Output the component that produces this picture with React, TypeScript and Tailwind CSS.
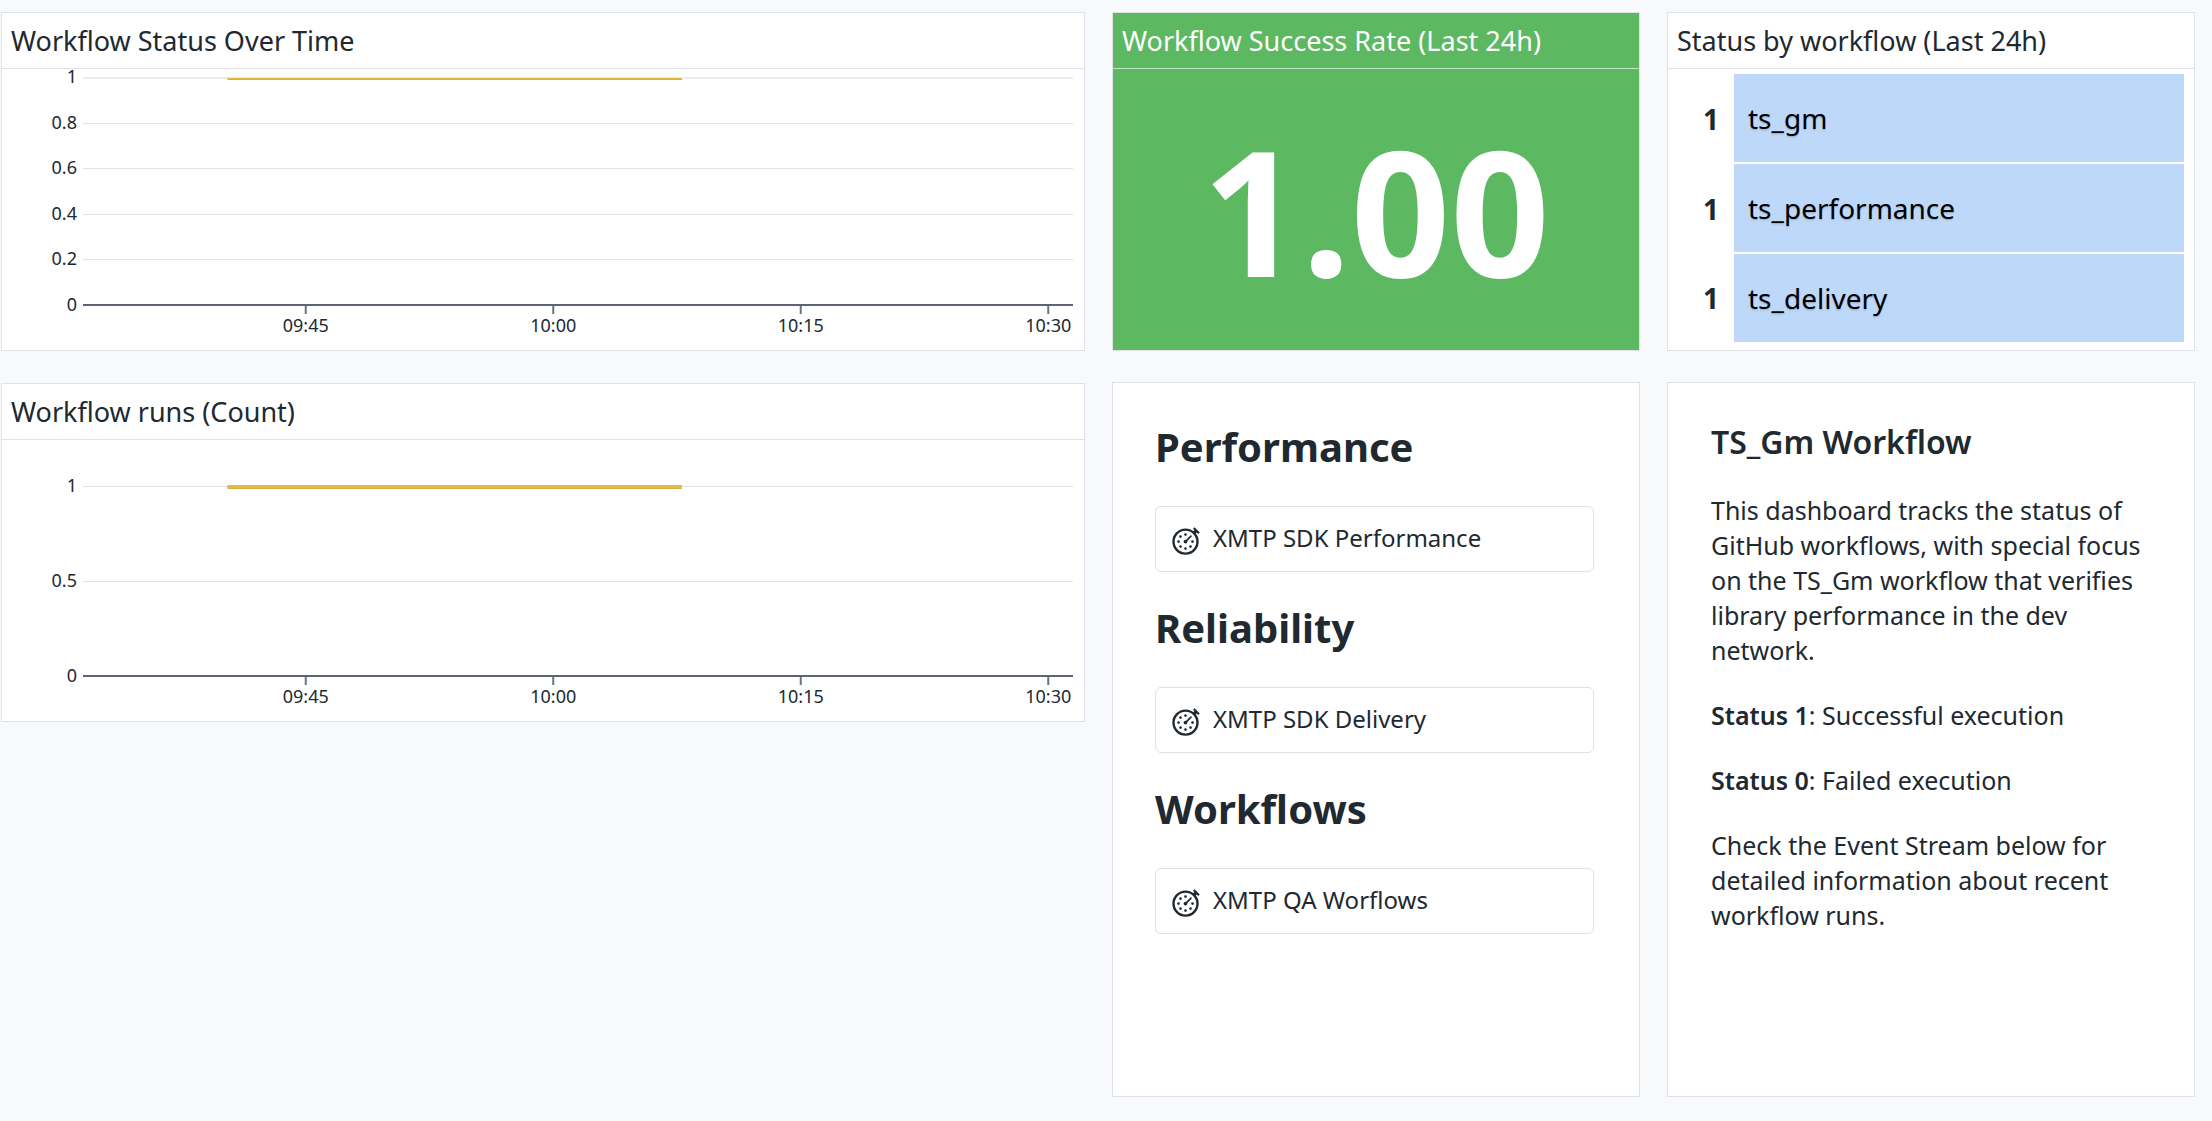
import type { ReactNode } from "react";

type GridLine = { label: string; y: number; weight: number };

const TIME_TICKS = [
  { label: "09:45", x: "22.5%" },
  { label: "10:00", x: "47.5%" },
  { label: "10:15", x: "72.5%" },
  { label: "10:30", x: "97.5%" },
];

const STATUS_GRID: GridLine[] = [
  { label: "1", y: 9, weight: 2 },
  { label: "0.8", y: 54.5, weight: 1 },
  { label: "0.6", y: 99.5, weight: 1 },
  { label: "0.4", y: 145.5, weight: 1 },
  { label: "0.2", y: 190.5, weight: 1 },
];

const RUNS_GRID: GridLine[] = [
  { label: "1", y: 46.5, weight: 1 },
  { label: "0.5", y: 141.5, weight: 1 },
];

const STATUSES = [
  { name: "ts_gm", value: 1 },
  { name: "ts_performance", value: 1 },
  { name: "ts_delivery", value: 1 },
];

const LINK_GROUPS = [
  { heading: "Performance", link: "XMTP SDK Performance" },
  { heading: "Reliability", link: "XMTP SDK Delivery" },
  { heading: "Workflows", link: "XMTP QA Worflows" },
];

function Widget({ title, children }: { title: string; children: ReactNode }) {
  return (
    <section className="border border-[#dfe2ea] bg-white">
      <h2 className="border-b border-[#dfe2ea] px-[9px] text-[27px] leading-[55px]">{title}</h2>
      {children}
    </section>
  );
}

function TimeChart({ label, grid, seriesY, seriesHeight }: {
  label: string;
  grid: GridLine[];
  seriesY: number;
  seriesHeight: number;
}) {
  return (
    <div className="pr-[11px] pl-[81px]">
      <svg role="img" aria-label={label} className="block h-[281px] w-full overflow-visible text-[18px]" fill="#212930">
        {grid.map((g) => (
          <g key={g.label}>
            <line x1="0" x2="100%" y1={g.y} y2={g.y} stroke={g.weight === 2 ? "#ebebeb" : "#e1e2e3"} strokeWidth={g.weight} />
            <text x="-6" y={g.y + 5} textAnchor="end">{g.label}</text>
          </g>
        ))}
        <rect x="14.6%" y={seriesY} width="45.9%" height={seriesHeight} fill="#d5ae51" />
        <rect x="14.6%" y={seriesY} width="45.9%" height={seriesHeight - 1} fill="#e5b93a" />
        <line x1="0" x2="100%" y1="236" y2="236" stroke="#5c6278" strokeWidth="2" />
        <text x="-6" y="242" textAnchor="end">0</text>
        {TIME_TICKS.map((t) => (
          <g key={t.label}>
            <line x1={t.x} x2={t.x} y1="237" y2="245" stroke="#6b7187" strokeWidth="2" />
            <text x={t.x} y="263" textAnchor="middle">{t.label}</text>
          </g>
        ))}
      </svg>
    </div>
  );
}

function StopwatchIcon() {
  const dots = [[0, -7], [-5, -5], [-7, 0], [-5, 5], [0, 7], [5, 5], [7, 0]];
  return (
    <svg aria-hidden="true" viewBox="0 0 28 28" className="size-7 shrink-0" fill="#212930" stroke="#212930">
      <circle cx="13.5" cy="14.6" r="12" fill="none" strokeWidth="2.4" />
      {dots.map(([x, y]) => (
        <circle key={`${x},${y}`} cx={13.5 + x} cy={14.6 + y} r="1.3" stroke="none" />
      ))}
      <circle cx="13.5" cy="14.6" r="1.9" stroke="none" />
      <path d="M13.5 14.6 19 9.1" strokeWidth="1.6" strokeLinecap="round" />
      <path d="M21.6 6.3 24.3 3.6" strokeWidth="3.4" />
      <path d="M21.8 1 27 6.2" strokeWidth="2.2" />
    </svg>
  );
}

export default function App() {
  return (
    <main className="grid min-h-screen grid-cols-[1084fr_528fr_528fr] gap-x-[27px] bg-[#f8f9fb] pt-3 pr-[17px] pb-6 pl-px font-['Noto_Sans',sans-serif] text-[#212930]">
      <div className="flex flex-col gap-8">
        <Widget title="Workflow Status Over Time">
          <TimeChart label="Workflow status over time" grid={STATUS_GRID} seriesY={9} seriesHeight={2} />
        </Widget>
        <Widget title="Workflow runs (Count)">
          <TimeChart label="Workflow runs" grid={RUNS_GRID} seriesY={45} seriesHeight={4} />
        </Widget>
      </div>

      <div className="flex flex-col gap-[31px]">
        <section className="border border-[#dfe2ea] bg-[#5db862] text-white">
          <h2 className="border-b border-[#c3e3c6] px-[9px] text-[27px] leading-[55px]">Workflow Success Rate (Last 24h)</h2>
          <p className="text-center text-[174px] leading-[281px] font-bold">1.00</p>
        </section>
        <section className="flex flex-1 flex-col gap-8 border border-[#dfe2ea] bg-white pt-10 pr-[45px] pl-[42px]">
          {LINK_GROUPS.map((g) => (
            <div key={g.heading} className="flex flex-col gap-[35px]">
              <h3 className="text-[40px] leading-[48px] font-bold">{g.heading}</h3>
              <a href="#" className="flex items-end gap-[13px] rounded-md border border-[#dfe0e9] px-4 pt-[14px] pb-4 text-[24px] leading-[34px]">
                <StopwatchIcon />
                {g.link}
              </a>
            </div>
          ))}
        </section>
      </div>

      <div className="flex flex-col gap-[31px]">
        <Widget title="Status by workflow (Last 24h)">
          <div className="pt-[5px] pr-[10px] pb-2">
            <table className="w-full border-separate border-spacing-0 text-[28px]">
              <tbody>
                {STATUSES.map((s, i) => (
                  <tr key={s.name}>
                    <td className="w-[66px] pr-[15px] text-right font-bold">{s.value}</td>
                    <th
                      scope="row"
                      className={
                        i < STATUSES.length - 1
                          ? "h-[90px] border-b-2 border-white bg-[#bdd8f9] px-[14px] text-left font-normal text-black text-shadow-sm"
                          : "h-[88px] bg-[#bdd8f9] px-[14px] text-left font-normal text-black text-shadow-sm"
                      }
                    >
                      {s.name}
                    </th>
                  </tr>
                ))}
              </tbody>
            </table>
          </div>
        </Widget>
        <section className="flex-1 border border-[#dfe2ea] bg-white px-[43px] pt-[39px] text-[25px] leading-[35px]">
          <h3 className="text-[32px] leading-[40px] font-semibold">TS_Gm Workflow</h3>
          <div className="flex flex-col gap-[30px] pt-[31px]">
            <p>
              This dashboard tracks the status of GitHub workflows, with special focus on the TS_Gm workflow that verifies
              library performance in the dev network.
            </p>
            <p><strong className="font-semibold">Status 1</strong>: Successful execution</p>
            <p><strong className="font-semibold">Status 0</strong>: Failed execution</p>
            <p>Check the Event Stream below for detailed information about recent workflow runs.</p>
          </div>
        </section>
      </div>
    </main>
  );
}
